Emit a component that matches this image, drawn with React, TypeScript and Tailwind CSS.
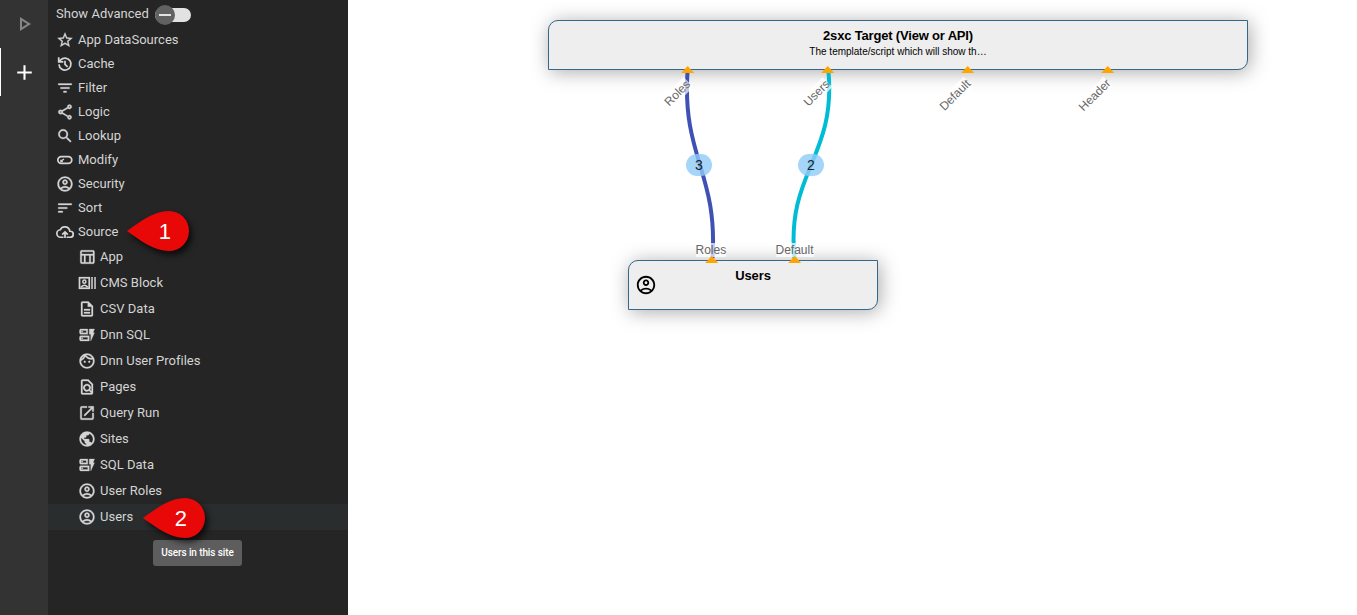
import type { ReactNode } from "react";
import type { IconType } from "react-icons";
import {
  MdStarBorder, MdFilterList, MdOutlineShare, MdSearch, MdOutlineAccountCircle, MdSort,
  MdOutlineTableChart, MdOutlineDescription, MdOutlineDynamicForm,
  MdOutlineFace, MdOutlineFindInPage, MdLaunch, MdPublic, MdOutlinePlayArrow, MdAdd,
} from "react-icons/md";

type IconProps = { className?: string };

function LineIcon({ className, children }: IconProps & { children: ReactNode }) {
  return (
    <svg viewBox="0 0 24 24" className={className} fill="none" stroke="currentColor" strokeWidth="2.3">
      {children}
    </svg>
  );
}

function ModifyIcon({ className }: IconProps) {
  return (
    <LineIcon className={className}>
      <rect x="2.5" y="7.5" width="18.5" height="9" rx="4.5" />
      <path d="M6.8 13.8L10.6 10.6M6.6 11.6V14H9" strokeWidth="1.8" />
    </LineIcon>
  );
}

function HistoryIcon({ className }: IconProps) {
  return (
    <LineIcon className={className}>
      <path d="M4 12.5A8 8 0 1 0 6 6.8L4 9M3.6 3V9.2H9.8M12 7.5V12.4L15.5 15.9" />
    </LineIcon>
  );
}

function CloudIcon({ className }: IconProps) {
  return (
    <LineIcon className={className}>
      <path d="M10 19H6.5A5 5 0 0 1 5.8 9A6.6 6.6 0 0 1 18.4 11H19A4 4 0 0 1 19 19H14M12 20V12M8.2 15.6L12 11.8L15.8 15.6" />
    </LineIcon>
  );
}

function ContactIcon({ className }: IconProps) {
  return (
    <LineIcon className={className}>
      <rect x="2" y="5" width="13" height="14" />
      <circle cx="8.5" cy="10.2" r="2.1" strokeWidth="2" />
      <path d="M4 17.5Q8.5 12.8 13 17.5" strokeWidth="2" />
      <path d="M18.7 4V20M22.7 4V20" strokeWidth="2" />
    </LineIcon>
  );
}

type Item = { label: string; icon: IconType | typeof ModifyIcon };

const groups: Item[] = [
  { label: "App DataSources", icon: MdStarBorder },
  { label: "Cache", icon: HistoryIcon },
  { label: "Filter", icon: MdFilterList },
  { label: "Logic", icon: MdOutlineShare },
  { label: "Lookup", icon: MdSearch },
  { label: "Modify", icon: ModifyIcon },
  { label: "Security", icon: MdOutlineAccountCircle },
  { label: "Sort", icon: MdSort },
  { label: "Source", icon: CloudIcon },
];

const sources: Item[] = [
  { label: "App", icon: MdOutlineTableChart },
  { label: "CMS Block", icon: ContactIcon },
  { label: "CSV Data", icon: MdOutlineDescription },
  { label: "Dnn SQL", icon: MdOutlineDynamicForm },
  { label: "Dnn User Profiles", icon: MdOutlineFace },
  { label: "Pages", icon: MdOutlineFindInPage },
  { label: "Query Run", icon: MdLaunch },
  { label: "Sites", icon: MdPublic },
  { label: "SQL Data", icon: MdOutlineDynamicForm },
  { label: "User Roles", icon: MdOutlineAccountCircle },
  { label: "Users", icon: MdOutlineAccountCircle },
];

function MenuRow({ item: { label, icon: Icon }, className }: { item: Item; className: string }) {
  const library = Icon !== ModifyIcon && Icon !== HistoryIcon && Icon !== CloudIcon && Icon !== ContactIcon;
  return (
    <li className={`flex items-center gap-1 ${className}`}>
      <Icon className={library ? "size-[18px] shrink-0 stroke-current [stroke-width:0.4px] [&_path[fill=none]]:stroke-none" : "size-[18px] shrink-0"} />
      <span>{label}</span>
    </li>
  );
}

function Callout({ n, className }: { n: string; className: string }) {
  return (
    <div className={`absolute z-10 grid h-10 w-[62px] ${className}`}>
      <svg viewBox="0 0 62 40" className="col-start-1 row-start-1 h-10 w-[62px] overflow-visible drop-shadow-[3px_4px_3px_rgba(0,0,0,0.7)]">
        <path d="M0 20C14 10 27 0 42 0A20 20 0 0 1 42 40C27 40 14 30 0 20Z" fill="#e80808" />
      </svg>
      <span className="relative col-start-1 row-start-1 pt-px pl-3.5 text-center font-['Liberation_Sans',Arial,sans-serif] text-[22px] leading-10 text-white">{n}</span>
    </div>
  );
}

function Triangle({ className }: { className: string }) {
  return (
    <svg viewBox="0 0 14 7" className={`absolute h-[7px] w-[14px] ${className}`}>
      <path d="M6.7 0L13.2 7H.2Z" fill="#ffa500" />
    </svg>
  );
}

function Label({ children, className }: { children: ReactNode; className: string }) {
  return (
    <span className={`absolute bg-white/70 text-[12px] leading-[14px] whitespace-nowrap text-[#666] ${className}`}>{children}</span>
  );
}

function Count({ children, className }: { children: ReactNode; className: string }) {
  return (
    <span className={`absolute top-[154px] flex h-[22px] w-[26px] items-center justify-center rounded-full bg-[#90caf9]/80 text-[14px] text-[#222] ${className}`}>{children}</span>
  );
}

export default function App() {
  return (
    <div className="flex h-[615px] w-full overflow-hidden bg-white font-[Roboto,sans-serif]">
      <nav className="flex w-12 shrink-0 flex-col bg-[#333]">
        <div className="flex h-12 items-center justify-center text-[#858585]">
          <MdOutlinePlayArrow className="size-6" />
        </div>
        <div className="flex h-12 items-center justify-center border-l border-white pr-px text-white">
          <MdAdd className="size-[25px]" />
        </div>
      </nav>

      <aside className="relative w-[300px] shrink-0 bg-[#252525] text-[13px] tracking-[0.02px] text-[#d4d4d4]">
        <div className="flex h-7 items-center pl-2">
          <span className="w-[99px] whitespace-nowrap">Show Advanced</span>
          <div className="mt-0.5 flex h-[14px] w-9 items-center rounded-full bg-[#e2e2e2]">
            <div className="flex size-5 shrink-0 items-center justify-center rounded-full bg-[#616161]">
              <div className="h-0.5 w-3 bg-[#e2e2e2]" />
            </div>
          </div>
        </div>
        <ul>
          {groups.map((item) => <MenuRow key={item.label} item={item} className="h-6 pl-2" />)}
        </ul>
        <ul>
          {sources.map((item) => <MenuRow key={item.label} item={item} className="h-[26px] pl-[30px] last:bg-[#2a2d2e]" />)}
        </ul>
        <Callout n="1" className="top-[211px] left-[79px]" />
        <Callout n="2" className="top-[498px] left-[95px]" />
        <div className="absolute top-[540px] left-[105px] flex h-[26px] w-[89px] items-center justify-center rounded-[3px] bg-[#5d5d5d] pb-px text-[10px] font-medium tracking-[-0.1px] whitespace-nowrap text-white">
          Users in this site
        </div>
      </aside>

      <main className="relative flex-1 font-['Liberation_Sans',Arial,sans-serif]">
        <section className="absolute top-5 left-[200px] h-[50px] w-[700px] rounded-tl-[10px] rounded-br-[10px] border border-[#346789] bg-[#eee] pt-[7px] text-center text-black shadow-[2px_2px_19px_#aaa]">
          <h2 className="text-[13px] leading-[15px] font-bold tracking-[-0.18px]">2sxc Target (View or API)</h2>
          <p className="mt-[3px] text-[10px] leading-3">The template/script which will show th…</p>
        </section>
        <section className="absolute top-[260px] left-[280px] flex h-[50px] w-[250px] items-center rounded-tl-[10px] rounded-br-[10px] border border-[#346789] bg-[#eee] px-1.5 text-center text-black shadow-[2px_2px_19px_#aaa]">
          <MdOutlineAccountCircle className="size-[22px]" />
          <h2 className="h-[34px] flex-1 pr-[22px] text-[13px] leading-[15px] font-bold tracking-[-0.1px]">Users</h2>
        </section>
        <svg viewBox="0 0 1009 615" className="absolute inset-0 h-[615px] w-[1009px]" fill="none" strokeWidth="4">
          <path d="M339.5 72C334 157 370 173 364.5 258" stroke="#3f51b5" />
          <path d="M480.5 72C488 157 438 173 446.5 258" stroke="#00bcd4" />
        </svg>
        <Label className="top-[86px] left-[314px] -rotate-45">Roles</Label>
        <Label className="top-[86px] left-[453px] -rotate-45">Users</Label>
        <Label className="top-[88px] left-[587.5px] -rotate-45">Default</Label>
        <Label className="top-[88px] left-[726.5px] -rotate-45">Header</Label>
        <Label className="top-[243px] left-[347.5px]">Roles</Label>
        <Label className="top-[243px] left-[427.5px]">Default</Label>
        <Triangle className="top-[66px] left-[333px]" />
        <Triangle className="top-[66px] left-[473px]" />
        <Triangle className="top-[66px] left-[613px]" />
        <Triangle className="top-[66px] left-[753px]" />
        <Triangle className="top-[256px] left-[356.5px]" />
        <Triangle className="top-[256px] left-[440px]" />
        <Count className="left-[338px]">3</Count>
        <Count className="left-[450px]">2</Count>
      </main>
    </div>
  );
}
